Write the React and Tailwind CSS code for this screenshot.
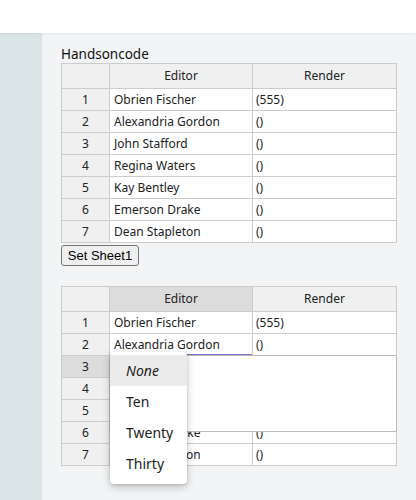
import React from "react";

const rows = [
  ["Obrien Fischer", "(555)"],
  ["Alexandria Gordon", "()"],
  ["John Stafford", "()"],
  ["Regina Waters", "()"],
  ["Kay Bentley", "()"],
  ["Emerson Drake", "()"],
  ["Dean Stapleton", "()"],
];

function Grid({ editorActive = false, activeRow = -1, focusRow = -1 }) {
  return (
    <div className="w-[336px] border-l border-t border-[#cccccc] text-[12px] text-[#222222]">
      <div className="flex h-[25px]">
        <div className="w-[48px] border-r border-b border-[#cccccc] bg-[#f0f0f0]" />
        <div
          className={
            editorActive
              ? "w-[143px] border-r border-b border-[#cccccc] bg-[#dcdcdc] flex items-center justify-center"
              : "w-[143px] border-r border-b border-[#cccccc] bg-[#f0f0f0] flex items-center justify-center"
          }
        >
          Editor
        </div>
        <div className="w-[144px] border-r border-b border-[#cccccc] bg-[#f0f0f0] flex items-center justify-center">
          Render
        </div>
      </div>
      {rows.map(([name, val], i) => (
        <div key={i} className="flex h-[22px]">
          <div
            className={
              i === activeRow
                ? "w-[48px] border-r border-b border-[#cccccc] bg-[#dcdcdc] flex items-center justify-center"
                : "w-[48px] border-r border-b border-[#cccccc] bg-[#f0f0f0] flex items-center justify-center"
            }
          >
            {i + 1}
          </div>
          <div className="relative w-[143px] border-r border-b border-[#cccccc] bg-white flex items-center pl-[4px] whitespace-nowrap overflow-hidden">
            {name}
            {i === focusRow && (
              <div className="absolute left-0 right-0 bottom-0 h-[1px] bg-[#7a6fc8]" />
            )}
          </div>
          <div className="w-[144px] border-r border-b border-[#cccccc] bg-white flex items-center pl-[3px]">
            {val}
          </div>
        </div>
      ))}
    </div>
  );
}

export default function App() {
  return (
    <div className="w-[416px] h-[500px] flex flex-col bg-white overflow-hidden font-['Noto_Sans',sans-serif]">
      <div className="relative z-10 h-[33px] shrink-0 bg-white shadow-[0_1px_3px_rgba(0,0,0,0.06)]" />
      <div className="flex flex-1">
        <div className="w-[42px] bg-[#d8e4e5]" />
        <div className="flex-1 bg-[#f3f4f5] pl-[19px] pt-[12px]">
          <div className="h-[18px] text-[13.5px] leading-[18px] text-[#111111]">Handsoncode</div>
          <Grid />
          <button className="block mt-[2px] w-[78px] h-[21px] border border-[#767676] rounded-[3px] bg-[#efefef] text-[13px] leading-[19px] text-black font-['Liberation_Sans',Arial,sans-serif]">
            Set Sheet1
          </button>
          <div className="relative mt-[20px] w-[336px]">
            <Grid editorActive activeRow={2} focusRow={1} />
            <div className="absolute left-[48px] top-[69px] w-[288px] h-[77px] bg-white border border-[#bbbbbb]" />
            <div className="absolute left-[49px] top-[66px] w-[77px] pt-[3px] pb-[5px] bg-white rounded-[4px] shadow-[0_3px_8px_rgba(0,0,0,0.22),0_1px_3px_rgba(0,0,0,0.12)] text-[14px] text-[#222222]">
              <div className="h-[31px] flex items-center pl-[16px] bg-[#ebebeb] italic">None</div>
              <div className="h-[31px] flex items-center pl-[16px]">Ten</div>
              <div className="h-[31px] flex items-center pl-[16px]">Twenty</div>
              <div className="h-[31px] flex items-center pl-[16px]">Thirty</div>
            </div>
          </div>
        </div>
      </div>
    </div>
  );
}
